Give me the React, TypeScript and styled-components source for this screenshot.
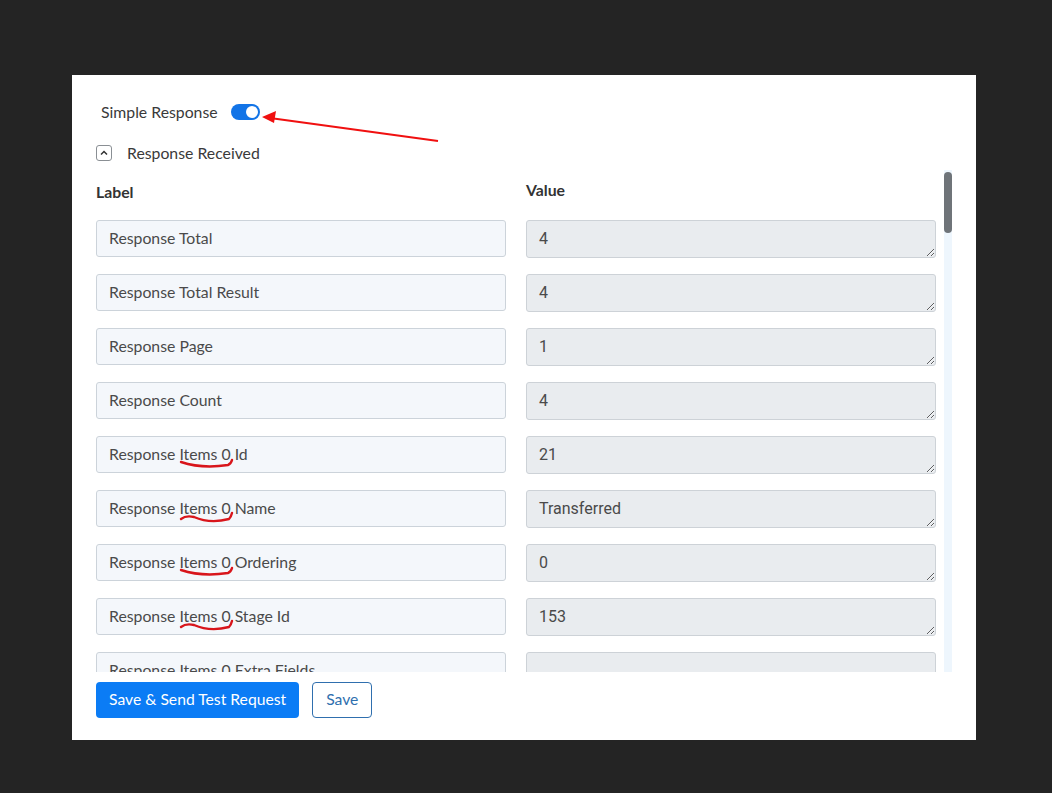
import React from 'react';
import styled, { createGlobalStyle } from 'styled-components';

const GlobalStyle = createGlobalStyle`
  html, body {
    margin: 0;
    padding: 0;
    background: #242424;
  }
  body {
    font-family: 'Lato', 'Noto Sans', sans-serif;
    color: #333;
  }
`;

const Page = styled.div`
  padding: 75px 0 0 72px;
  height: 793px;
  box-sizing: border-box;
`;

const Card = styled.div`
  position: relative;
  width: 904px;
  height: 665px;
  box-sizing: border-box;
  background: #fff;
  padding: 24px 24px 22px 24px;
  display: flex;
  flex-direction: column;
`;

const ToggleRow = styled.div`
  display: flex;
  align-items: center;
  gap: 13px;
  height: 24px;
  padding-left: 5px;
  font-size: 15.8px;
  color: #3a3a3a;
`;

const Switch = styled.span<{ $on: boolean }>`
  position: relative;
  display: inline-block;
  width: 29px;
  height: 16px;
  margin-top: 2px;
  border-radius: 8px;
  background: ${(p) => (p.$on ? '#1274e7' : '#c7cdd4')};

  &::after {
    content: '';
    position: absolute;
    top: 2px;
    left: ${(p) => (p.$on ? '15px' : '2px')};
    width: 12px;
    height: 12px;
    border-radius: 50%;
    background: #fff;
  }
`;

const AccordionHead = styled.div`
  display: flex;
  align-items: center;
  gap: 15px;
  margin-top: 17px;
  height: 24px;
  font-size: 15.8px;
  color: #3a3a3a;
`;

const ChevronBox = styled.span`
  width: 14px;
  height: 14px;
  margin-top: 2px;
  border: 1px solid #8a8f94;
  border-radius: 3px;
  display: flex;
  align-items: center;
  justify-content: center;
`;

const ScrollArea = styled.div`
  margin-top: 6px;
  height: 502px;
  display: flex;
`;

const Viewport = styled.div`
  flex: 1;
  overflow: hidden;
`;

const ScrollTrack = styled.div`
  width: 8px;
  background: #eef6fd;
  display: flex;
  flex-direction: column;
`;

const ScrollThumb = styled.div<{ $size: number }>`
  margin-top: 2px;
  height: ${(p) => p.$size}px;
  border-radius: 4px;
  background: #6f7479;
`;

const Grid = styled.div`
  display: grid;
  grid-template-columns: 410px 410px;
  column-gap: 20px;
  row-gap: 16px;
`;

const ColHead = styled.div<{ $up?: boolean }>`
  box-sizing: border-box;
  height: 34px;
  padding-top: ${(p) => (p.$up ? '10px' : '12px')};
  font-size: 15.8px;
  font-weight: 700;
  color: #333;
`;

const LabelField = styled.div`
  position: relative;
  height: 37px;
  box-sizing: border-box;
  border: 1px solid #ccd3da;
  border-radius: 3px;
  background: #f4f7fb;
  padding: 0 12px 2px;
  display: flex;
  align-items: center;
  font-size: 15.8px;
  color: #4a4a4a;
  white-space: nowrap;
  overflow: hidden;
`;

const ValueField = styled.textarea`
  height: 38px;
  box-sizing: border-box;
  border: 1px solid #cdd2d7;
  border-radius: 3px;
  background: #e9ecef;
  padding: 7px 12px;
  font-family: 'Roboto', 'Noto Sans', sans-serif;
  font-size: 16px;
  color: #4a4a4a;
  resize: vertical;
  width: 100%;
  margin: 0;
  display: block;
  line-height: 22px;
  overflow: hidden;
`;

const Squiggle = styled.svg`
  position: absolute;
  left: 83px;
  top: 23px;
  width: 56px;
  height: 12px;
  overflow: visible;
`;

const Footer = styled.div`
  display: flex;
  gap: 13px;
  margin-top: 10px;
`;

const PrimaryButton = styled.button`
  height: 36px;
  padding: 0 13px 2px;
  border: none;
  border-radius: 4px;
  background: #0b7cf5;
  color: #fff;
  font-family: 'Lato', 'Noto Sans', sans-serif;
  font-size: 15.7px;
  cursor: pointer;
`;

const OutlineButton = styled.button`
  height: 36px;
  padding: 0 13px 2px;
  border: 1px solid #2f6fae;
  border-radius: 4px;
  background: #fff;
  color: #2f6fae;
  font-family: 'Lato', 'Noto Sans', sans-serif;
  font-size: 15.7px;
  cursor: pointer;
`;

const Arrow = styled.svg`
  position: absolute;
  left: 180px;
  top: 30px;
  width: 200px;
  height: 45px;
  overflow: visible;
`;

type Row = { label: string; value: string; mark?: number };

const fields = ['Id', 'Name', 'Ordering', 'Stage Id', 'Extra Fields', 'Color', 'Created At', 'Updated At', 'Is Default', 'Probability', 'Pipeline Id', 'Active', 'Type', 'Owner Id', 'Position', 'Deleted', 'Rotten Flag', 'Rotten Days'];
const names = ['Transferred', 'Lead In', 'Contacted', 'Won'];

const rows: Row[] = [
  { label: 'Response Total', value: '4' },
  { label: 'Response Total Result', value: '4' },
  { label: 'Response Page', value: '1' },
  { label: 'Response Count', value: '4' },
  { label: 'Response Items 0 Id', value: '21', mark: 0 },
  { label: 'Response Items 0 Name', value: 'Transferred', mark: 1 },
  { label: 'Response Items 0 Ordering', value: '0', mark: 0 },
  { label: 'Response Items 0 Stage Id', value: '153', mark: 1 },
  { label: 'Response Items 0 Extra Fields', value: '' },
];

for (let i = 0; i < 4; i++) {
  fields.forEach((f, j) => {
    if (i === 0 && j < 5) return;
    let v = '';
    if (f === 'Id') v = String(21 + i);
    if (f === 'Name') v = names[i];
    if (f === 'Ordering') v = String(i);
    if (f === 'Stage Id') v = String(153 + i);
    rows.push({ label: `Response Items ${i} ${f}`, value: v });
  });
}

const marks = [
  'M1 2 Q 22 9 48 5 Q 51 4 52 0',
  'M1 5 Q 6 1 14 3 Q 30 10 49 5 Q 51 3 52 -1',
];

const viewportHeight = 502;
const contentHeight = 34 + rows.length * 54;
const thumbSize = Math.max(30, Math.round((viewportHeight * viewportHeight) / contentHeight));

const App: React.FC = () => {
  return (
    <>
      <GlobalStyle />
      <Page>
        <Card>
          <ToggleRow>
            Simple Response
            <Switch $on />
          </ToggleRow>
          <AccordionHead>
            <ChevronBox>
              <svg width="8" height="6" viewBox="0 0 8 6">
                <path d="M1 4.5 L4 1.5 L7 4.5" fill="none" stroke="#333" strokeWidth="1.5" />
              </svg>
            </ChevronBox>
            Response Received
          </AccordionHead>
          <ScrollArea>
            <Viewport>
              <Grid>
                <ColHead>Label</ColHead>
                <ColHead $up>Value</ColHead>
                {rows.map((r, i) => (
                  <React.Fragment key={i}>
                    <LabelField>
                      {r.label}
                      {r.mark !== undefined && (
                        <Squiggle viewBox="0 0 56 12">
                          <path d={marks[r.mark]} fill="none" stroke="#d8151b" strokeWidth="2.4" strokeLinecap="round" />
                        </Squiggle>
                      )}
                    </LabelField>
                    <ValueField readOnly defaultValue={r.value} rows={1} />
                  </React.Fragment>
                ))}
              </Grid>
            </Viewport>
            <ScrollTrack>
              <ScrollThumb $size={thumbSize} />
            </ScrollTrack>
          </ScrollArea>
          <Footer>
            <PrimaryButton>Save &amp; Send Test Request</PrimaryButton>
            <OutlineButton>Save</OutlineButton>
          </Footer>
          <Arrow viewBox="0 0 200 45">
            <line x1="186" y1="36" x2="18" y2="13" stroke="#f01010" strokeWidth="2.2" />
            <polygon points="10,12 24,6 22,18" fill="#f01010" />
          </Arrow>
        </Card>
      </Page>
    </>
  );
};

export default App;
